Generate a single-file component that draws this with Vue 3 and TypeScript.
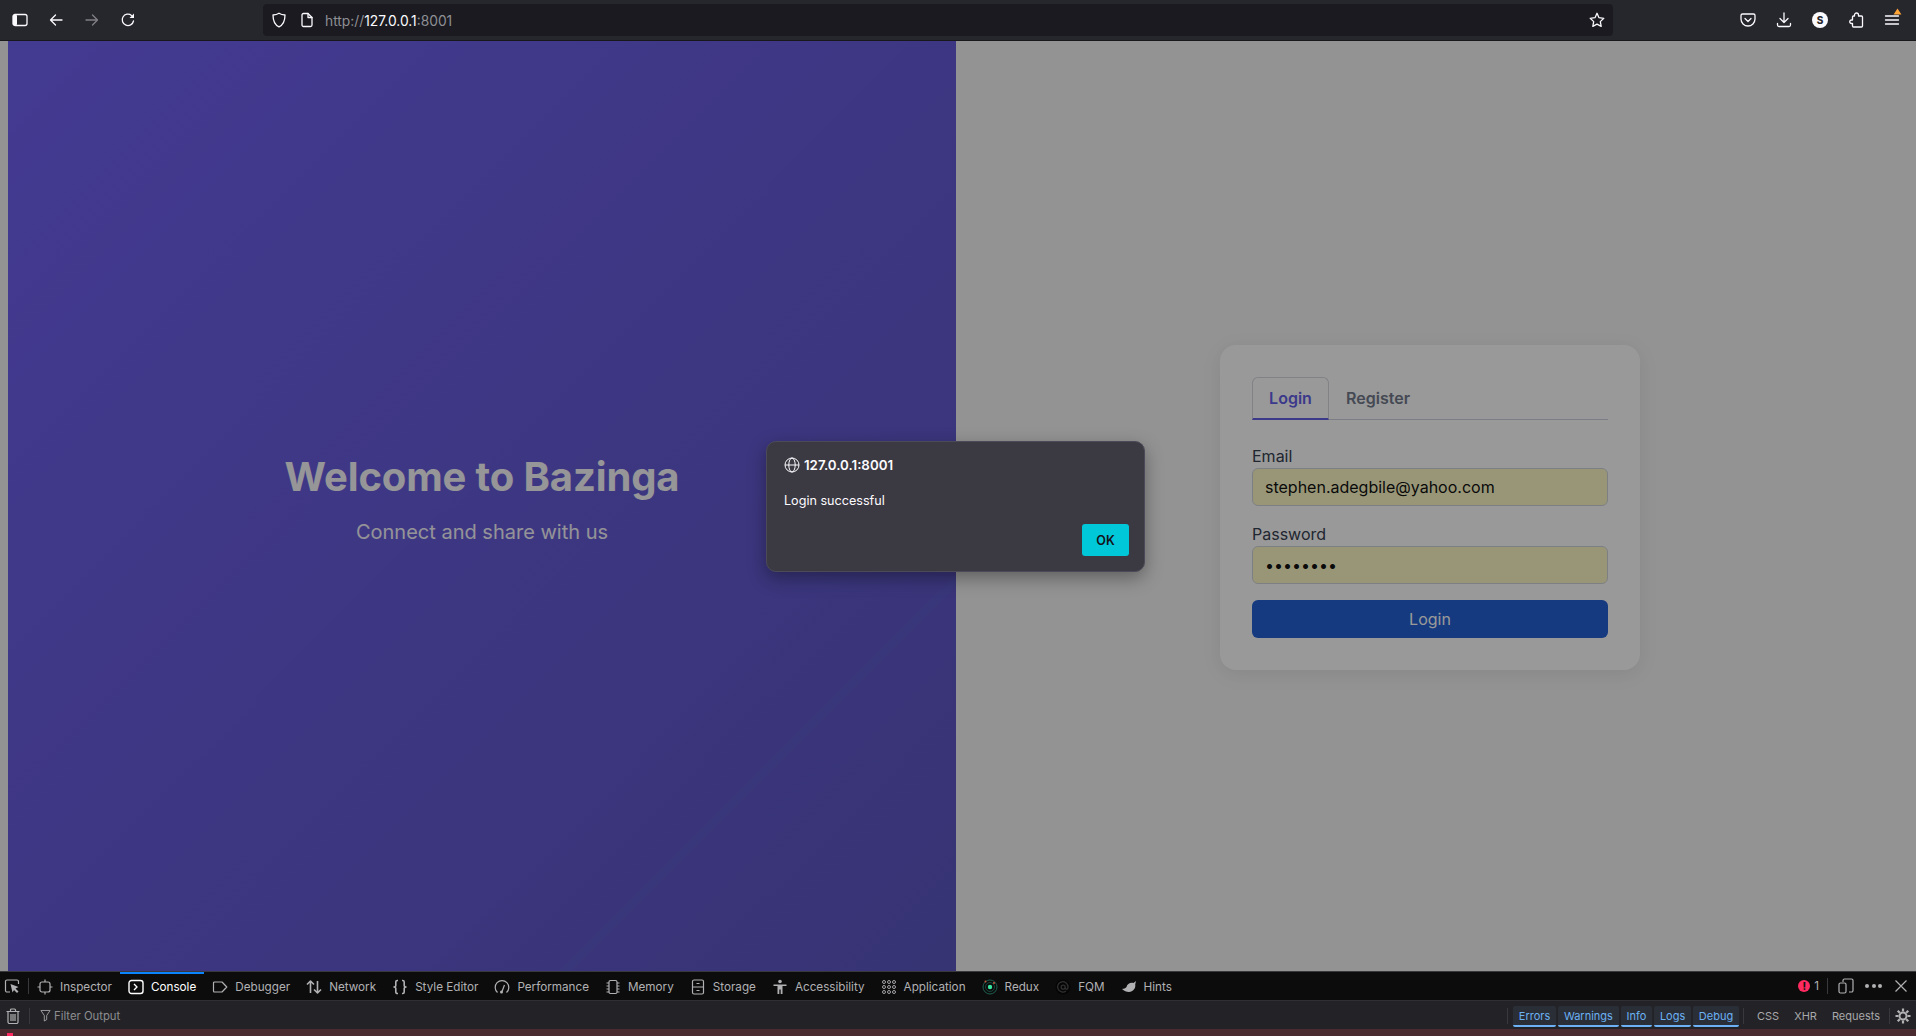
<script setup lang="ts">
const tabs = [
  { name: 'Inspector', icon: 'inspector' },
  { name: 'Console', icon: 'console', active: true },
  { name: 'Debugger', icon: 'debugger' },
  { name: 'Network', icon: 'network' },
  { name: 'Style Editor', icon: 'style' },
  { name: 'Performance', icon: 'performance' },
  { name: 'Memory', icon: 'memory' },
  { name: 'Storage', icon: 'storage' },
  { name: 'Accessibility', icon: 'accessibility' },
  { name: 'Application', icon: 'application' },
  { name: 'Redux', icon: 'redux' },
  { name: 'FQM', icon: 'fqm' },
  { name: 'Hints', icon: 'hints' },
]
const filters = ['Errors', 'Warnings', 'Info', 'Logs', 'Debug']
const plainFilters = ['CSS', 'XHR', 'Requests']
const dots = [0, 1, 2]
</script>

<template>
  <div class="window">
    <header class="toolbar">
      <svg class="tb-icon first" viewBox="0 0 16 16"><rect x="1" y="2.5" width="14" height="11" rx="2" class="st" /><rect x="1" y="2.5" width="4" height="11" rx="1.5" fill="#fbfbfe" /></svg>
      <svg class="tb-icon nav" viewBox="0 0 16 16"><path d="M14 8H2.5M7.5 3 2.5 8l5 5" class="st" /></svg>
      <svg class="tb-icon nav dim" viewBox="0 0 16 16"><path d="M2 8h11.5M8.5 3l5 5-5 5" class="st" /></svg>
      <svg class="tb-icon nav" viewBox="0 0 16 16"><path d="M13.5 9A5.7 5.7 0 1 1 11.5 3.4" class="st" /><path d="M14 1.5V6H9.5z" fill="#fbfbfe" /></svg>
      <div class="urlbar">
        <svg class="ub-icon" viewBox="0 0 16 16"><path d="M8 1.2c2 1.3 4 1.7 6 1.8 0 5.500-1.500 9.800-6 11.800C3.500 12.800 2 8.500 2 3c2-.1 4-.5 6-1.800z" class="st" /></svg>
        <svg class="ub-icon doc" viewBox="0 0 16 16"><path d="M3 3a1.500 1.500 0 0 1 1.500-1.500H9L13 5.500V13a1.500 1.500 0 0 1-1.500 1.500h-7A1.500 1.500 0 0 1 3 13z" class="st" /><path d="M9 1.500V5.500H13" class="st" /></svg>
        <div class="url">http://<b>127.0.0.1</b>:8001</div>
        <svg class="ub-icon star" viewBox="0 0 16 16"><path d="m8 1.300 2 4.400 4.800.6-3.500 3.300.9 4.800L8 12.100l-4.200 2.300.9-4.800L1.200 6.300 6 5.700z" class="st" /></svg>
      </div>
      <div class="tb-right">
        <svg class="tb-icon" viewBox="0 0 16 16"><path d="M2.500 2h11A1.500 1.500 0 0 1 15 3.500V7A7 7 0 0 1 1 7V3.500A1.500 1.500 0 0 1 2.500 2z" class="st" /><path d="m5 6.500 3 3 3-3" class="st" /></svg>
        <svg class="tb-icon" viewBox="0 0 16 16"><path d="M8 1v9.500M4 6.500l4 4 4-4M1.500 11.500V13A1.500 1.500 0 0 0 3 14.500h10a1.500 1.500 0 0 0 1.500-1.500v-1.500" class="st" /></svg>
        <span class="avatar">S</span>
        <svg class="tb-icon" viewBox="0 0 16 16"><path d="M6.500 4V3a2 2 0 0 1 4 0v1h3a1 1 0 0 1 1 1v9a1 1 0 0 1-1 1h-8a1 1 0 0 1-1-1v-2.500H3.500a1.750 1.750 0 0 1 0-3.500h1V5a1 1 0 0 1 1-1z" class="st" /></svg>
        <span class="menu">
          <svg class="tb-icon" viewBox="0 0 16 16"><path d="M1.500 4h13M1.500 8h13M1.500 12h13" class="st" /></svg>
          <svg class="menu-dot" viewBox="0 0 10 8"><path d="M5 .5 9.500 7.500H.5z" fill="#ffa436" /></svg>
        </span>
      </div>
    </header>

    <main class="page">
      <section class="hero">
        <h1>Welcome to Bazinga</h1>
        <p>Connect and share with us</p>
      </section>
      <section class="side">
        <form class="card" @submit.prevent>
          <div class="card-tabs">
            <button type="button" class="card-tab on">Login</button>
            <button type="button" class="card-tab">Register</button>
          </div>
          <label class="field first-field">
            <span>Email</span>
            <input type="text" value="stephen.adegbile@yahoo.com" />
          </label>
          <label class="field">
            <span>Password</span>
            <input type="password" value="password" />
          </label>
          <button type="button" class="submit">Login</button>
        </form>
      </section>
      <div class="scrim"></div>
      <div class="dialog">
        <div class="d-origin">
          <svg viewBox="0 0 16 16" class="globe"><circle cx="8" cy="8" r="7" class="gs" /><ellipse cx="8" cy="8" rx="3.200" ry="7" class="gs" /><path d="M1 8h14" class="gs" /></svg>
          127.0.0.1:8001
        </div>
        <div class="d-msg">Login successful</div>
        <div class="d-actions"><button type="button" class="ok">OK</button></div>
      </div>
    </main>

    <footer class="devtools">
      <div class="dt-tabs">
        <svg class="dt-pick" viewBox="0 0 16 16"><path d="M6 14H3a1.500 1.500 0 0 1-1.500-1.500v-9A1.500 1.500 0 0 1 3 2h10a1.500 1.500 0 0 1 1.500 1.500V6" class="ds" /><path d="m6.500 6 8 3-3 1.500 3 3-1.500 1.500-3-3L8.500 14.500z" fill="#b1b1b3" /></svg>
        <span class="dt-div pick-div"></span>
        <div v-for="t in tabs" :key="t.name" class="dt-tab" :class="{ active: t.active }">
          <svg class="dt-ic" viewBox="0 0 16 16">
            <template v-if="t.icon === 'inspector'"><rect x="3" y="3" width="10" height="10" rx="2" class="ds" /><path d="M8 .5v2.500M8 13v2.500M.5 8H3M13 8h2.500" class="ds" /></template>
            <template v-else-if="t.icon === 'console'"><rect x="1" y="1.500" width="14" height="13" rx="2.500" class="ds wt" /><path d="m6 5 3 3-3 3" class="ds wt" /></template>
            <path v-else-if="t.icon === 'debugger'" d="M2.500 3h7.500L14.800 8 10 13H2.500A1 1 0 0 1 1.500 12V4A1 1 0 0 1 2.500 3z" class="ds" />
            <path v-else-if="t.icon === 'network'" d="M4.500 14V2M1 5.500 4.500 2 8 5.500M11.500 2v12M8 10.500l3.500 3.500 3.500-3.500" class="ds thick" />
            <path v-else-if="t.icon === 'style'" d="M6 1.500H5.300A1.500 1.500 0 0 0 3.800 3v3.300C3.800 7.200 3.200 8 2 8c1.200 0 1.800.8 1.800 1.700V13a1.500 1.500 0 0 0 1.500 1.500H6M10 1.500h.7A1.500 1.500 0 0 1 12.200 3v3.300c0 .9.600 1.700 1.800 1.700-1.200 0-1.800.8-1.800 1.700V13a1.500 1.500 0 0 1-1.500 1.500H10" class="ds thick" />
            <template v-else-if="t.icon === 'performance'"><path d="M3.500 13.500A6.800 6.800 0 1 1 12.500 13.500" class="ds" /><path d="M8 12.500 10.500 6" class="ds" /><circle cx="7.500" cy="13" r="1.500" fill="#b1b1b3" /></template>
            <template v-else-if="t.icon === 'memory'"><rect x="4" y="1.500" width="8" height="13" rx="1.500" class="ds" /><path d="M1.500 4H4M1.500 7H4M1.500 10H4M1.500 13H4M12 4h2.500M12 7h2.500M12 10h2.500M12 13h2.500" class="ds" /></template>
            <template v-else-if="t.icon === 'storage'"><rect x="2.500" y="1" width="11" height="14" rx="1.500" class="ds" /><path d="M2.500 8h11M6.500 4.500h3M6.500 11.500h3" class="ds" /></template>
            <template v-else-if="t.icon === 'accessibility'"><circle cx="8" cy="2.500" r="1.800" fill="#b1b1b3" /><path d="M1.500 5.500h13v1.500H10.500v8H8.700v-4.500H7.300V15H5.500V7H1.500z" fill="#b1b1b3" /></template>
            <template v-else-if="t.icon === 'application'"><template v-for="r in dots" :key="r"><circle v-for="c in dots" :key="c" :cx="3 + c * 5" :cy="3 + r * 5" r="1.500" class="ds fine" /></template></template>
            <template v-else-if="t.icon === 'redux'"><circle cx="8" cy="8" r="7" fill="none" stroke="#1f5f4e" stroke-width="1" /><circle cx="8" cy="8" r="4.500" fill="none" stroke="#17483c" stroke-width="1" /><circle cx="8" cy="8" r="2.200" fill="#3be8a0" /><circle cx="3.500" cy="2.500" r="1" fill="#c9563c" /><circle cx="12" cy="4" r="1" fill="#c9563c" /></template>
            <template v-else-if="t.icon === 'fqm'"><circle cx="8" cy="8" r="7.500" fill="#050505" /><path d="M11 12A5.200 5.200 0 1 1 13 8c0 1.500-.6 2.300-1.500 2.300S10.300 9.500 10.300 8.500" fill="none" stroke="#303030" stroke-width="1.300" /><circle cx="8.200" cy="8.200" r="2" fill="none" stroke="#303030" stroke-width="1.300" /></template>
            <path v-else d="M1 10c2-.5 3-.5 4.500-2 .5-3 4-5 7-4l2.500-2-.8 3.500C15 9 12 13 8 13c-2.500 0-5-1-7-3z" fill="#b1b1b3" />
          </svg>
          <span>{{ t.name }}</span>
        </div>
        <div class="dt-right">
          <span class="err"><i>!</i><b>1</b></span>
          <span class="dt-div tall"></span>
          <svg class="dt-ic resp" viewBox="0 0 16 16"><path d="M5 4V2.500A1.500 1.500 0 0 1 6.500 1h7A1.500 1.500 0 0 1 15 2.500v10a1.500 1.500 0 0 1-1.500 1.500H11" class="ds" /><rect x="1" y="5" width="7" height="10" rx="1.500" class="ds" /></svg>
          <span class="more"><i></i><i></i><i></i></span>
          <svg class="dt-ic close" viewBox="0 0 16 16"><path d="m2.500 2.500 11 11M13.500 2.500l-11 11" class="ds" /></svg>
        </div>
      </div>
      <div class="dt-filter">
        <svg class="dt-ic trash" viewBox="0 0 16 16"><path d="M1.500 3.500h13M5.500 3.500V2a1 1 0 0 1 1-1h3a1 1 0 0 1 1 1v1.500M3 3.500h10V14a1.500 1.500 0 0 1-1.500 1.500h-7A1.500 1.500 0 0 1 3 14zM6 6v7M8 6v7M10 6v7" class="ds" /></svg>
        <span class="dt-div"></span>
        <svg class="funnel" viewBox="0 0 12 14"><path d="M1 1.500h10L7.300 7v4.500L4.700 13V7z" class="ds fine" /></svg>
        <span class="filter-text">Filter Output</span>
        <div class="dt-right filters">
          <span class="dt-div chips-div"></span>
          <span v-for="f in filters" :key="f" class="chip">{{ f }}</span>
          <span class="dt-div before-plain"></span>
          <span v-for="f in plainFilters" :key="f" class="plain">{{ f }}</span>
          <span class="dt-div after-plain"></span>
          <svg class="gear" viewBox="0 0 16 16"><circle cx="8" cy="8" r="3.500" fill="none" stroke="#b1b1b3" stroke-width="2" /><path d="M8 .5v3M8 12.500v3M.5 8h3M12.500 8h3M2.700 2.700l2.100 2.100M11.200 11.200l2.100 2.100M13.300 2.700l-2.100 2.100M4.800 11.200l-2.100 2.100" stroke="#b1b1b3" stroke-width="2.200" fill="none" /></svg>
        </div>
      </div>
      <div class="dt-msg"><i></i></div>
    </footer>
  </div>
</template>

<style>
html, body { margin: 0; padding: 0; overflow: hidden; }
</style>

<style scoped>
.window { width: 100%; height: 100vh; display: flex; flex-direction: column; font-family: Inter, "Liberation Sans", sans-serif; background: #0c0c0d; }
.st { fill: none; stroke: #fbfbfe; stroke-width: 1.300; stroke-linecap: round; stroke-linejoin: round; }
.ds { fill: none; stroke: #b1b1b3; stroke-width: 1.200; stroke-linejoin: round; }
.ds.wt { stroke: #fff; stroke-width: 1.400; }
.ds.thick { stroke-width: 1.600; }
.ds.fine { stroke-width: .9; }

.toolbar { height: 41px; box-sizing: border-box; flex: none; display: flex; align-items: center; background: #26262d; border-bottom: 1px solid #17171c; padding-left: 12px; }
.tb-icon { width: 16px; height: 16px; flex: none; display: block; }
.tb-icon.nav { margin-left: 20px; }
.tb-icon.dim { opacity: .42; }
.urlbar { width: 1350px; height: 32px; margin-left: 127px; flex: none; box-sizing: border-box; background: #1a1a20; border-radius: 4px; display: flex; align-items: center; padding: 0 8px; }
.ub-icon { width: 16px; height: 16px; flex: none; }
.ub-icon.doc { margin-left: 12px; }
.url { flex: 1; margin-left: 10px; padding-top: 1px; font-size: 13.800px; color: #8f8f94; }
.url b { color: #fbfbfe; font-weight: 400; }
.tb-right { display: flex; align-items: center; margin-left: 127px; gap: 20px; }
.avatar { width: 16px; height: 16px; border-radius: 50%; background: #fbfbfe; color: #26262d; font-size: 10px; font-weight: 800; line-height: 16px; text-align: center; }
.menu { position: relative; display: block; }
.menu-dot { position: absolute; width: 9px; height: 7px; right: -2px; top: -4px; }

.page { flex: 1; min-height: 0; position: relative; display: flex; padding-left: 8px; background: #f5f5f5; }
.hero { width: 948px; flex: none; display: flex; flex-direction: column; align-items: center; justify-content: center; color: #fff; background: linear-gradient(135deg, #7162f4 0%, #6159cc 78.800%, #5f5dcd 79.200%, #6159cc 79.600%, #5c57c1 100%); padding-bottom: 14px; box-sizing: border-box; }
.hero h1 { margin: 0; font-size: 40px; line-height: 48px; font-weight: 700; letter-spacing: -.13px; opacity: .97; }
.hero p { margin: 17px 0 0; font-size: 20px; line-height: 28px; opacity: .95; }
.side { flex: 1; display: flex; justify-content: center; align-items: center; padding: 2px 12px 0 0; }
.card { width: 420px; height: 325px; box-sizing: border-box; background: #fff; border-radius: 16px; padding: 32px; box-shadow: 0 4px 20px rgba(0,0,0,.08); }
.card-tabs { display: flex; border-bottom: 1px solid #d1d1e0; height: 43px; box-sizing: border-box; }
.card-tab { height: 43px; padding: 0 16px; border: 1px solid transparent; border-radius: 6px 6px 0 0; background: none; font: 600 16px Inter, sans-serif; color: #737a8a; box-sizing: border-box; }
.card-tab.on { border-color: #d8d8e0; border-bottom: 2px solid #6560e8; color: #6560e8; width: 77px; }
.field { display: block; font-size: 16px; margin-top: 16px; color: #374151; }
.field.first-field { margin-top: 24px; }
.field span { display: block; line-height: 24px; height: 24px; }
.field input { display: block; width: 100%; height: 38px; box-sizing: border-box; border: 1px solid #d1d5db; border-radius: 6px; background: #fffbc8; padding: 0 12px; font: 16px Inter, sans-serif; color: #111; outline: none; }
.submit { display: block; width: 100%; height: 38px; margin-top: 16px; border: 0; border-radius: 6px; background: #2361d5; color: #fff; font: 400 16px Inter, sans-serif; }
.scrim { position: absolute; inset: 0; background: rgba(0,0,0,.4); }
.dialog { position: absolute; left: 766px; top: 400px; width: 379px; height: 131px; box-sizing: border-box; border-radius: 10px; background: #3b3942; border: 1px solid #4c4a58; box-shadow: 0 6px 18px rgba(0,0,0,.35); color: #fbfbfe; padding: 13px 15px 0 17px; }
.d-origin { display: flex; align-items: center; gap: 4px; font-size: 13.300px; font-weight: 600; line-height: 20px; }
.globe { width: 16px; height: 16px; }
.gs { fill: none; stroke: #fbfbfe; stroke-width: 1; }
.d-msg { font-size: 12.600px; line-height: 20px; margin-top: 16px; }
.d-actions { display: flex; justify-content: flex-end; margin-top: 13px; }
.ok { width: 47px; height: 32px; border: 0; border-radius: 3px; background: #00c8d8; color: #15141a; font: 600 12.500px Inter, sans-serif; }

.devtools { flex: none; height: 64px; display: flex; flex-direction: column; border-top: 1px solid #38383d; font-size: 11.700px; color: #b1b1b3; }
.dt-tabs { height: 28px; display: flex; align-items: center; background: #0c0c0d; }
.dt-pick { width: 16px; height: 16px; margin-left: 4px; }
.dt-div { width: 1px; height: 16px; background: #38383d; margin: 0 8px; flex: none; display: block; }
.pick-div { margin-right: 0; }
.dt-tab { height: 28px; box-sizing: border-box; display: flex; align-items: center; gap: 7px; padding: 0 8px; border-top: 2px solid transparent; }
.dt-tab.active { border-top-color: #0a84ff; color: #fff; }
.dt-ic { width: 16px; height: 16px; flex: none; }
.dt-right { margin-left: auto; display: flex; align-items: center; }
.err { display: flex; align-items: center; gap: 4px; color: #b1b1b3; }
.err i { width: 12px; height: 12px; border-radius: 50%; background: #ff2a5f; color: #111; font: 800 10px/12px Inter, sans-serif; text-align: center; }
.err b { font-weight: 400; }
.resp { margin-left: 2px; }
.more { display: flex; gap: 2.500px; margin-left: 11px; }
.more i { width: 4px; height: 4px; border-radius: 50%; background: #b1b1b3; }
.close { margin: 0 7px 0 11px; }
.dt-filter { height: 29px; flex: none; display: flex; align-items: center; background: #232327; border-top: 1px solid #303034; padding-top: 1px; box-sizing: border-box; }
.trash { margin-left: 5px; }
.funnel { width: 11px; height: 13px; margin-left: 2px; }
.filter-text { margin-left: 3px; font-size: 11.300px; color: #8d8d90; }
.filters { height: 100%; font-size: 11px; }
.chip { height: 21px; margin: 2px 2px 0 0; padding: 0 5.800px; display: flex; align-items: center; color: #6bb1f3; background: #2a2e36; border-bottom: 2px solid #6bb1f3; border-radius: 2px; box-sizing: border-box; }
.chips-div { margin: 0 5px 0 0; }
.before-plain { margin: 0 13px 0 2px; }
.plain { margin-right: 15px; color: #a8a8aa; }
.after-plain { margin: 0 0 0 -6px; }
.gear { width: 16px; height: 16px; margin: 0 5px 0 5px; }
.dt-msg { flex: 1; background: #4a2b30; position: relative; }
.dt-msg i { position: absolute; left: 7px; top: 4px; width: 6px; height: 3px; background: #ff2a5f; }
</style>
